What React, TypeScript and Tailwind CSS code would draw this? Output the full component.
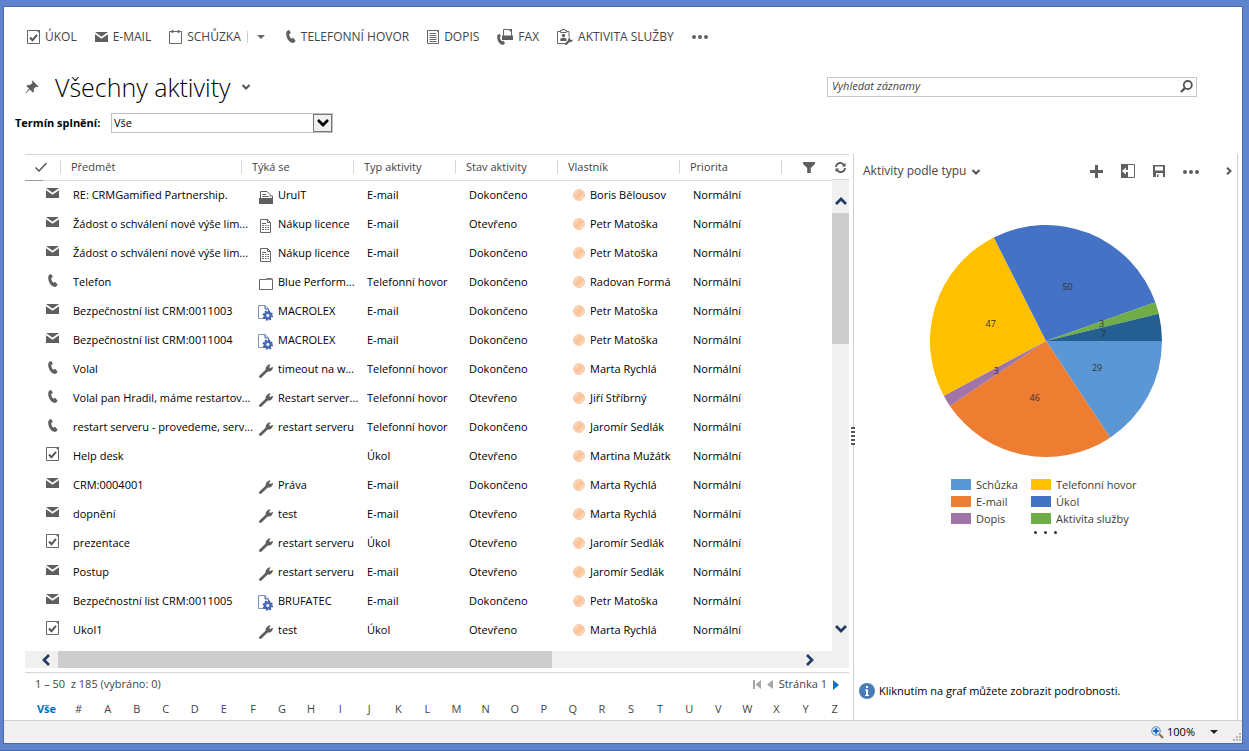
import type { ReactNode } from "react";

const FONT = "font-['Open_Sans','Noto_Sans',sans-serif]";

const rows = [
  { kind: "mail", subject: "RE: CRMGamified Partnership.", ref: "account", about: "UruIT", type: "E-mail", state: "Dokončeno", owner: "Boris Bělousov" },
  { kind: "mail", subject: "Žádost o schválení nové výše lim...", ref: "order", about: "Nákup licence", type: "E-mail", state: "Otevřeno", owner: "Petr Matoška" },
  { kind: "mail", subject: "Žádost o schválení nové výše lim...", ref: "order", about: "Nákup licence", type: "E-mail", state: "Dokončeno", owner: "Petr Matoška" },
  { kind: "phone", subject: "Telefon", ref: "folder", about: "Blue Perform...", type: "Telefonní hovor", state: "Dokončeno", owner: "Radovan Formá" },
  { kind: "mail", subject: "Bezpečnostní list CRM:0011003", ref: "custom", about: "MACROLEX", type: "E-mail", state: "Dokončeno", owner: "Petr Matoška" },
  { kind: "mail", subject: "Bezpečnostní list CRM:0011004", ref: "custom", about: "MACROLEX", type: "E-mail", state: "Dokončeno", owner: "Petr Matoška" },
  { kind: "phone", subject: "Volal", ref: "wrench", about: "timeout na w...", type: "Telefonní hovor", state: "Dokončeno", owner: "Marta Rychlá" },
  { kind: "phone", subject: "Volal pan Hradil, máme restartov...", ref: "wrench", about: "Restart server...", type: "Telefonní hovor", state: "Otevřeno", owner: "Jiří Stříbrný" },
  { kind: "phone", subject: "restart serveru - provedeme, serv...", ref: "wrench", about: "restart serveru", type: "Telefonní hovor", state: "Dokončeno", owner: "Jaromír Sedlák" },
  { kind: "task", subject: "Help desk", ref: "", about: "", type: "Úkol", state: "Otevřeno", owner: "Martina Mužátk" },
  { kind: "mail", subject: "CRM:0004001", ref: "wrench", about: "Práva", type: "E-mail", state: "Dokončeno", owner: "Marta Rychlá" },
  { kind: "mail", subject: "dopnění", ref: "wrench", about: "test", type: "E-mail", state: "Otevřeno", owner: "Marta Rychlá" },
  { kind: "task", subject: "prezentace", ref: "wrench", about: "restart serveru", type: "Úkol", state: "Otevřeno", owner: "Jaromír Sedlák" },
  { kind: "mail", subject: "Postup", ref: "wrench", about: "restart serveru", type: "E-mail", state: "Otevřeno", owner: "Jaromír Sedlák" },
  { kind: "mail", subject: "Bezpečnostní list CRM:0011005", ref: "custom", about: "BRUFATEC", type: "E-mail", state: "Dokončeno", owner: "Petr Matoška" },
  { kind: "task", subject: "Ukol1", ref: "wrench", about: "test", type: "Úkol", state: "Otevřeno", owner: "Marta Rychlá" },
];

const columns = [
  { title: "Předmět", width: "" },
  { title: "Týká se", width: "w-[112px]" },
  { title: "Typ aktivity", width: "w-[102px]" },
  { title: "Stav aktivity", width: "w-[102px]" },
  { title: "Vlastník", width: "w-[122px]" },
  { title: "Priorita", width: "w-[102px]" },
];

const slices = [
  { value: 29, color: "#5b97d5" },
  { value: 46, color: "#ed7d31" },
  { value: 3, color: "#a074a8" },
  { value: 47, color: "#ffc000" },
  { value: 50, color: "#4472c4" },
  { value: 3, color: "#70ad47" },
  { value: 7, color: "#255e91" },
];

const legend = [
  { label: "Schůzka", color: "bg-[#5b97d5]" },
  { label: "Telefonní hovor", color: "bg-[#ffc000]" },
  { label: "E-mail", color: "bg-[#ed7d31]" },
  { label: "Úkol", color: "bg-[#4472c4]" },
  { label: "Dopis", color: "bg-[#a074a8]" },
  { label: "Aktivita služby", color: "bg-[#70ad47]" },
];

const letters = ["#", ..."ABCDEFGHIJKLMNOPQRSTUVWXYZ"];

function TaskIcon() {
  return (
    <svg width="13" height="14" viewBox="0 0 13 14" fill="none">
      <path d="M.5.5h9.500l2.500 2.500v10.500H.5z" stroke="#666" />
      <path d="M9.500 0H13v3.500z" fill="#666" />
      <path d="M3 7.500l2.500 2.700L10 4.800" stroke="#555" strokeWidth="1.900" />
    </svg>
  );
}

function MailIcon() {
  return (
    <svg width="13" height="10" viewBox="0 0 13 10">
      <path d="M0 0h13v10H0z" fill="#5f5f5f" />
      <path d="M-.5.8l7 5 7-5" fill="none" stroke="#fff" strokeWidth="1.700" />
    </svg>
  );
}

function CalendarIcon() {
  return (
    <svg width="13" height="15" viewBox="0 0 13 15" fill="none" stroke="#666">
      <path d="M.5 2.500h12v12H.5z" />
      <path d="M3.500 1v3M9.500 1v3" strokeWidth="1.600" />
    </svg>
  );
}

function PhoneIcon() {
  return (
    <svg width="10" height="13" viewBox="0 0 10 13" fill="#5f5f5f">
      <path d="M.6 1.600Q1.800.2 3.300 0l1.500 3-1.700 1.300Q3.400 7 5.200 8.700l1.900-.9L9.600 10.700Q8.800 12.400 7 13 3 12.300 1.200 8.300-.4 4.500.6 1.600z" />
    </svg>
  );
}

function LetterIcon() {
  return (
    <svg width="12" height="14" viewBox="0 0 12 14" fill="none" stroke="#666">
      <path d="M.5.5h9.500l1.500 1.500v11.500H.5z" />
      <path d="M2.500 3.500h6.500M2.500 5.500h7M2.500 7.500h7M2.500 9.500h7M2.500 11.500h7" />
      <path d="M9 0h3v3z" fill="#666" stroke="none" />
    </svg>
  );
}

function FaxIcon() {
  return (
    <svg width="16" height="16" viewBox="0 0 16 16" fill="none">
      <path d="M6.500 7V.5h5.500l2.500 2.500v4" stroke="#666" />
      <path d="M5 6.500h11V11H5zM11.500 0h3.500v3.500z" fill="#5f5f5f" />
      <path d="M.5 6Q1.500 5 3 5l.8 2.400-1 .9q.4 2.600 2.200 3.900l1.200-.5L8 14q-.8 1.500-2.200 2-3-.5-4.600-3.500Q-.4 9 .5 6z" fill="#5f5f5f" />
    </svg>
  );
}

function ServiceIcon() {
  return (
    <svg width="16" height="16" viewBox="0 0 16 16" fill="none">
      <path d="M3 2.500H.5v12H8M9.500 2.500H12V8" stroke="#666" />
      <path d="M3.500 3.500v-2H5V.5h3v1h1.500v2z" stroke="#666" />
      <circle cx="6.500" cy="6.500" r="1.700" fill="#5f5f5f" />
      <path d="M3.300 12V9.800Q6.500 7.500 9.500 9.800V12z" fill="#5f5f5f" />
      <path d="M9 15l3.500-3.500" stroke="#5f5f5f" strokeWidth="2.400" strokeLinecap="round" />
      <path d="M11 10.500q.3-2 2.500-2.300l-.7 1.800 1.200 1.200 2-.6q-.3 2.400-2.300 2.600-2.400-.2-2.700-2.700z" fill="#5f5f5f" />
    </svg>
  );
}

function WrenchIcon() {
  return (
    <svg width="14" height="14" viewBox="0 0 14 14" fill="none">
      <path d="M1.500 12.500L8.500 5.800" stroke="#5f5f5f" strokeWidth="2.800" strokeLinecap="round" />
      <path d="M6.600 5.400Q6.400 1.600 10.800.2l.7.5-1.500 2.200 1.200 1.200L13.600 3q.6.300.3.900-1.200 4-5.200 3.600z" fill="#5f5f5f" />
    </svg>
  );
}

function AccountIcon() {
  return (
    <svg width="14" height="13" viewBox="0 0 14 13" fill="none">
      <path d="M1.500 7V.5h6.500L11 3.500V5h2.500v2" stroke="#5f5f5f" />
      <path d="M3.500 3.500H7M3.500 5.500h6" stroke="#5f5f5f" />
      <path d="M0 7h14v6H0z" fill="#5f5f5f" />
    </svg>
  );
}

function OrderIcon() {
  return (
    <svg width="11" height="14" viewBox="0 0 11 14" fill="none" stroke="#666">
      <path d="M.5.5h7l3 3v10H.5z" />
      <path d="M7.500.5v3h3M2 4.500h4M2 6.500h2M5 6.500h1.500M7.500 6.500H9M2 8.500h2M5 8.500h1.500M7.500 8.500H9M2 10.500h2M5 10.500h1.500M7.500 10.500H9" />
    </svg>
  );
}

function FolderIcon() {
  return (
    <svg width="14" height="12" viewBox="0 0 14 12" fill="none">
      <path d="M.5 1.500H7l1-1h4.500l1 1v10H.5z" stroke="#666" />
      <path d="M7 2V.500h6.500V2z" fill="#888" />
    </svg>
  );
}

function CustomEntityIcon() {
  return (
    <svg width="15" height="16" viewBox="0 0 15 16" fill="none">
      <path d="M.5.5H7L10.500 4v9.500H.5z" fill="#fff" stroke="#7d95b8" />
      <path d="M7 .5V4h3.500" stroke="#3d5f9a" />
      <circle cx="9.800" cy="10.500" r="4.400" stroke="#2f4f93" strokeWidth="1.600" strokeDasharray="1.700 1.750" />
      <circle cx="9.800" cy="10.500" r="2.900" fill="#cfdcf5" stroke="#4468b5" strokeWidth="2.400" />
      <circle cx="9.800" cy="10.500" r="1" fill="#fff" />
    </svg>
  );
}

function Chevron({ d, className = "" }: { d: "up" | "down" | "left" | "right"; className?: string }) {
  const paths = {
    up: "M1 9l5-5 5 5",
    down: "M1 3l5 5 5-5",
    left: "M9 1L4 6l5 5",
    right: "M3 1l5 5-5 5",
  };
  return (
    <svg width="12" height="12" viewBox="0 0 12 12" fill="none" stroke="currentColor" strokeWidth="2.700" className={className}>
      <path d={paths[d]} />
    </svg>
  );
}

function SmallChevron({ right = false }: { right?: boolean }) {
  return (
    <svg width="8" height="8" viewBox="0 0 8 8" fill="none" stroke="#555" strokeWidth="2">
      <path d={right ? "M2 .8L5.500 4 2 7.200" : "M.5 2L4 5.500 7.500 2"} />
    </svg>
  );
}

function Dots() {
  return (
    <svg width="16" height="4" viewBox="0 0 16 4" fill="#5f5f5f">
      <circle cx="2" cy="2" r="2" />
      <circle cx="8" cy="2" r="2" />
      <circle cx="14" cy="2" r="2" />
    </svg>
  );
}

const kindIcons: Record<string, ReactNode> = { mail: <MailIcon />, phone: <PhoneIcon />, task: <TaskIcon /> };

const refIcons: Record<string, ReactNode> = {
  account: <AccountIcon />,
  order: <OrderIcon />,
  folder: <FolderIcon />,
  custom: <CustomEntityIcon />,
  wrench: <WrenchIcon />,
};

function Command({ icon, label }: { icon: ReactNode; label: string }) {
  return (
    <button className="flex items-center gap-[5px] whitespace-nowrap">
      {icon}
      <span>{label}</span>
    </button>
  );
}

function CommandBar() {
  return (
    <nav className="flex h-[59px] items-center gap-[18px] pl-[23px] text-xs text-[#444]">
      <Command icon={<TaskIcon />} label="ÚKOL" />
      <Command icon={<MailIcon />} label="E-MAIL" />
      <div className="flex items-center gap-[6px]">
        <Command icon={<CalendarIcon />} label="SCHŮZKA" />
        <span className="h-3 w-px bg-[#d0d0d0]" />
        <button aria-label="Další možnosti schůzky" className="px-[3px]">
          <svg width="8" height="4" viewBox="0 0 8 4"><path d="M0 0h8L4 4z" fill="#666" /></svg>
        </button>
      </div>
      <Command icon={<PhoneIcon />} label="TELEFONNÍ HOVOR" />
      <Command icon={<LetterIcon />} label="DOPIS" />
      <Command icon={<FaxIcon />} label="FAX" />
      <Command icon={<ServiceIcon />} label="AKTIVITA SLUŽBY" />
      <button aria-label="Další příkazy"><Dots /></button>
    </nav>
  );
}

function TitleBar() {
  return (
    <div className="flex h-[41px] items-center pl-[21px] pr-[45px]">
      <button aria-label="Připnout">
        <svg width="14" height="14" viewBox="0 0 14 14" fill="#5f5f5f">
          <path d="M7.500.5l6 6-1.200.8-1.300-.5L8.700 9l.3 2.500-1.200.9-3-3L.8 13.500l-.5-.3L4 8.600 1.400 6l1-1.100 2.500.2L7.500 3 6.700 1.300z" />
        </svg>
      </button>
      <h1 className="ml-4 text-[25px] font-light leading-8 text-black">Všechny aktivity</h1>
      <button aria-label="Změnit zobrazení" className="ml-[11px]"><SmallChevron /></button>
      <div className="ml-auto flex h-5 w-[370px] items-center border border-[#c6c6c6] pl-1 pr-[3px]">
        <input aria-label="Vyhledat záznamy" placeholder="Vyhledat záznamy" className="min-w-0 flex-1 text-[11px] italic outline-none placeholder:text-[#444]" />
        <button aria-label="Hledat">
          <svg width="13" height="13" viewBox="0 0 13 13" fill="none" stroke="#555">
            <circle cx="7.800" cy="5" r="4" strokeWidth="1.800" />
            <path d="M5 8L1 12" strokeWidth="2.400" />
          </svg>
        </button>
      </div>
    </div>
  );
}

function DueFilter() {
  return (
    <div className="flex h-[47px] items-start pl-[11px] pt-[6px] text-[11px] text-black">
      <label htmlFor="due" className="w-24 font-bold leading-5">Termín splnění:</label>
      <div className="relative h-5 w-[222px] border border-[#c0c0c0]">
        <select id="due" className="block h-full w-full appearance-none pl-0.5 leading-4 outline-none">
          <option>Vše</option>
        </select>
        <span className="pointer-events-none absolute inset-y-0 right-0 flex w-[19px] items-center justify-center border border-[#777] bg-[#f0f0f0]">
          <Chevron d="down" />
        </span>
      </div>
    </div>
  );
}

function ActivityTable() {
  return (
    <table className="w-full table-fixed border-collapse text-left text-[11px] leading-4">
      <thead>
        <tr className="h-[26px] border-y border-[#d6d6d6] text-[#444]">
          <th className="relative w-9 p-0 pb-0.5">
            <div className="flex h-[14px] items-center justify-center border-r border-[#d6d6d6] pr-1">
              <svg width="12" height="10" viewBox="0 0 12 10" fill="none" stroke="#555" strokeWidth="1.500" role="img" aria-label="Vybrat vše">
                <path d="M.5 5.500l3.500 3.500L11.500 1" />
              </svg>
            </div>
            <span className="absolute -bottom-px left-0 h-px w-[18px] bg-[#999]" />
          </th>
          {columns.map((col) => (
            <th key={col.title} className={`p-0 pb-0.5 font-normal ${col.width}`}>
              <div className="flex h-[14px] items-center whitespace-nowrap border-r border-[#d6d6d6] pl-[10px]">{col.title}</div>
            </th>
          ))}
          <th className="w-[50px] p-0">
            <button aria-label="Filtr" className="ml-[21px] flex">
              <svg width="12" height="11" viewBox="0 0 12 11" fill="#5f5f5f">
                <path d="M0 0h12v2L7.800 6v5H4.200V6L0 2z" />
              </svg>
            </button>
          </th>
        </tr>
      </thead>
      <tbody className="text-black">
        {rows.map((row, i) => (
          <tr key={i} className="h-[29px]">
            <td className="p-0">
              <div className="ml-[21px] flex w-[13px] justify-center pb-1">{kindIcons[row.kind]}</div>
            </td>
            <td className="whitespace-nowrap p-0 pl-3">{row.subject}</td>
            <td className="p-0 pl-4">
              <div className="flex items-center gap-[5px] whitespace-nowrap">
                {row.ref && <span className="flex w-[15px] shrink-0 justify-center pt-1">{refIcons[row.ref]}</span>}
                {row.about}
              </div>
            </td>
            <td className="whitespace-nowrap p-0 pl-[13px]">{row.type}</td>
            <td className="p-0 pl-[13px]">{row.state}</td>
            <td className="p-0 pl-[15px]">
              <div className="flex items-center gap-[5px] whitespace-nowrap">
                <span className="size-3 shrink-0 rounded-full border border-[#eecfb8] bg-linear-to-br from-[#ffe3c4] via-[#fdbf94] to-[#ffe8c8]" />
                {row.owner}
              </div>
            </td>
            <td className="p-0 pl-[13px]">Normální</td>
            <td className="p-0" />
          </tr>
        ))}
      </tbody>
    </table>
  );
}

function GridPane() {
  return (
    <section className="flex min-w-0 flex-1 flex-col pl-[21px] pr-1">
      <div className="flex h-[497px]">
        <div className="min-w-0 flex-1">
          <ActivityTable />
        </div>
        <div className="flex w-[17px] flex-col">
          <div className="flex h-[26px] items-center justify-center border-y border-[#d6d6d6]">
            <button aria-label="Obnovit">
              <svg width="11" height="11" viewBox="0 0 11 11" fill="none" stroke="#555" strokeWidth="1.700">
                <path d="M1 5A4.200 4.200 0 0 1 8.800 3M10 6A4.200 4.200 0 0 1 2.200 8" />
                <path d="M10.500.8V4.500H6.800zM.5 10.200V6.500h3.700z" fill="#555" stroke="none" />
              </svg>
            </button>
          </div>
          <div className="flex flex-1 flex-col bg-[#f0f0f0] text-[#1f3a63]">
            <button aria-label="Nahoru" className="flex h-[33px] items-end justify-center pb-[6px]"><Chevron d="up" /></button>
            <div className="h-[131px] bg-[#cdcdcd]" />
            <button aria-label="Dolů" className="mt-auto flex h-[33px] items-start justify-center pt-[5px]"><Chevron d="down" /></button>
          </div>
        </div>
      </div>
      <div className="flex h-[17px] bg-[#f0f0f0] text-[#1f3a63]">
        <button aria-label="Vlevo" className="flex w-[33px] items-center justify-end pr-[6px]"><Chevron d="left" /></button>
        <div className="w-3/5 bg-[#cdcdcd]" />
        <button aria-label="Vpravo" className="ml-auto flex w-[45px] items-center"><Chevron d="right" /></button>
      </div>
      <div className="mt-1 flex h-6 items-center border-t border-[#d6d6d6] pl-[10px] pr-[10px] text-[11px] text-[#444]">
        <span className="whitespace-pre">1 – 50  z 185 (vybráno: 0)</span>
        <div className="ml-auto flex items-center gap-[6px]">
          <button aria-label="První stránka">
            <svg width="8" height="9" viewBox="0 0 8 9" fill="#a6a6a6"><path d="M0 0h2v9H0zM8 0v9L2.500 4.500z" /></svg>
          </button>
          <button aria-label="Předchozí stránka">
            <svg width="6" height="9" viewBox="0 0 6 9" fill="#a6a6a6"><path d="M6 0v9L0 4.500z" /></svg>
          </button>
          <span>Stránka 1</span>
          <button aria-label="Další stránka">
            <svg width="6" height="10" viewBox="0 0 6 10" fill="#0072c6"><path d="M0 0v10l6-5z" /></svg>
          </button>
        </div>
      </div>
      <div className="flex h-6 items-center pl-1 pt-0.5 text-[11px] text-[#444]">
        <a href="#vse" className="w-[35px] text-center font-bold text-[#0072c6]">Vše</a>
        {letters.map((letter) => (
          <a key={letter} href={`#${letter}`} className="flex-1 text-center">{letter}</a>
        ))}
      </div>
    </section>
  );
}

const RADIUS = 116;

function PieChart() {
  const total = slices.reduce((sum, s) => sum + s.value, 0);
  let start = 0;
  const parts = slices.map((s) => {
    const from = (start / total) * Math.PI * 2;
    start += s.value;
    const to = (start / total) * Math.PI * 2;
    const mid = (from + to) / 2;
    const point = (angle: number, r: number) => [RADIUS + r * Math.cos(angle), RADIUS + r * Math.sin(angle)];
    const [x1, y1] = point(from, RADIUS);
    const [x2, y2] = point(to, RADIUS);
    const [lx, ly] = point(mid, 58);
    return { ...s, d: `M${RADIUS} ${RADIUS}L${x1} ${y1}A${RADIUS} ${RADIUS} 0 0 1 ${x2} ${y2}z`, lx, ly };
  });

  return (
    <svg width="232" height="232" viewBox="0 0 232 232" role="img" aria-label="Aktivity podle typu">
      {parts.map((p, i) => (
        <path key={i} d={p.d} fill={p.color} />
      ))}
      {parts.map((p, i) => (
        <text key={i} x={p.lx} y={p.ly + 3} textAnchor="middle" fontSize="9" fill="#333">{p.value}</text>
      ))}
    </svg>
  );
}

function ChartPane() {
  return (
    <aside className="relative flex w-[385px] shrink-0 flex-col border-x border-[#d0d0d0]">
      <svg width="4" height="18" viewBox="0 0 4 18" className="absolute top-[273px] -left-[3px]">
        <path d="M0 0h4v18H0z" fill="#fff" />
        <path d="M1 0v18M3 0v18" stroke="#222" strokeWidth="1.500" strokeDasharray="2 2" />
      </svg>
      <header className="flex h-[34px] items-center pl-[9px] pr-1">
        <h2 className="text-xs text-[#444]">Aktivity podle typu</h2>
        <button aria-label="Změnit graf" className="ml-[6px] pt-0.5"><SmallChevron /></button>
        <div className="ml-auto flex items-center gap-[18px]">
          <button aria-label="Nový graf">
            <svg width="13" height="13" viewBox="0 0 13 13" fill="#5f5f5f"><path d="M5 0h3v5h5v3H8v5H5V8H0V5h5z" /></svg>
          </button>
          <button aria-label="Rozbalit graf">
            <svg width="14" height="14" viewBox="0 0 14 14" fill="none">
              <path d="M.5.500h13v13H.5z" stroke="#666" />
              <path d="M0 0h7v14H0z" fill="#5f5f5f" />
              <path d="M1 7l4-3.500v7zM4 6h3v2H4z" fill="#fff" />
            </svg>
          </button>
          <button aria-label="Uložit">
            <svg width="12" height="12" viewBox="0 0 12 12" fill="#5f5f5f">
              <path fillRule="evenodd" d="M0 0h12v12H0zM2 1.500v4h8v-4zM3 8v4h1V9.500h1.500V12H10V8z" />
            </svg>
          </button>
          <button aria-label="Další" className="pt-0.5"><Dots /></button>
          <button aria-label="Sbalit podokno" className="ml-2"><SmallChevron right /></button>
        </div>
      </header>
      <div className="mt-[37px] flex justify-center"><PieChart /></div>
      <ul className="mt-[19px] ml-[97px] grid grid-cols-[80px_1fr] text-[11px] leading-[17px] text-[#3b3b3b]">
        {legend.map((item) => (
          <li key={item.label} className="flex items-center gap-[5px] whitespace-nowrap">
            <span className={`h-[11px] w-5 ${item.color}`} />
            {item.label}
          </li>
        ))}
      </ul>
      <div className="mt-1 flex justify-center gap-[7px]">
        <span className="size-[3px] rounded-full bg-[#333]" />
        <span className="size-[3px] rounded-full bg-[#333]" />
        <span className="size-[3px] rounded-full bg-[#333]" />
      </div>
      <p className="mt-auto mb-[21px] flex items-center gap-1 pl-[5px] text-[11px] leading-4 text-black">
        <svg width="16" height="16" viewBox="0 0 16 16">
          <circle cx="8" cy="8" r="8" fill="#4a7db5" />
          <path d="M7 3h2v2H7zM6 6.500h3V12h1v1H6v-1h1V7.500H6z" fill="#fff" />
        </svg>
        Kliknutím na graf můžete zobrazit podrobnosti.
      </p>
    </aside>
  );
}

function StatusBar() {
  return (
    <footer className="flex h-[23px] items-center border-t border-[#d0d0d0] bg-[#f0f0f0] pr-px">
      <button className="ml-auto flex items-center gap-[3px] text-[11px] text-black">
        <svg width="13" height="13" viewBox="0 0 13 13" fill="none">
          <path d="M8 8l4 4" stroke="#8a6d4b" strokeWidth="2.200" />
          <circle cx="5" cy="5" r="4.300" fill="#d3e8fb" stroke="#6f8fae" />
          <path d="M5 2.200v5.600M2.200 5h5.600" stroke="#1668c5" strokeWidth="2" />
        </svg>
        100%
      </button>
      <button aria-label="Změnit lupu" className="mx-[15px]">
        <svg width="8" height="4" viewBox="0 0 8 4"><path d="M0 0h8L4 4z" fill="#222" /></svg>
      </button>
      <svg width="8" height="8" viewBox="0 0 8 8" fill="#b5b5b5" className="mb-0.5 self-end">
        <path d="M6 0h2v2H6zM3 3h2v2H3zM6 3h2v2H6zM0 6h2v2H0zM3 6h2v2H3zM6 6h2v2H6z" />
      </svg>
    </footer>
  );
}

export default function App() {
  return (
    <div className={`flex min-h-screen flex-col border-b border-[#4a69b0] bg-[#5f83cd] pt-[6px] pr-[6px] pb-[6px] pl-[3px] ${FONT}`}>
      <div className="flex flex-1 flex-col border border-[#4a69b0] bg-white">
        <CommandBar />
        <TitleBar />
        <DueFilter />
        <main className="flex flex-1 pr-1">
          <GridPane />
          <ChartPane />
        </main>
        <StatusBar />
      </div>
    </div>
  );
}
